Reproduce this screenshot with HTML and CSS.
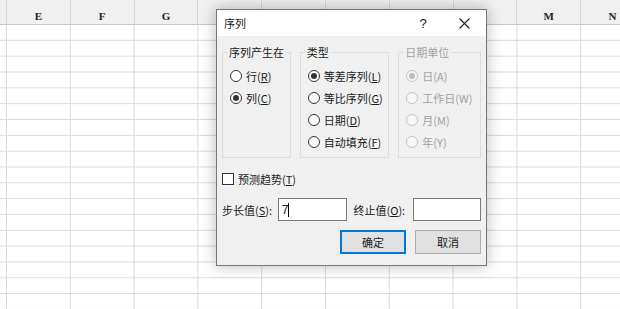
FILE: index.html
```html
<!DOCTYPE html>
<html lang="zh-CN">
<head>
  <meta charset="UTF-8">
  <title>序列</title>
  <link rel="stylesheet" href="styles.css">
</head>
<body>
  <div class="sheet">
    <div class="col-head">
      <div class="hcell first"></div>
      <div class="hcell">E</div>
      <div class="hcell">F</div>
      <div class="hcell">G</div>
      <!-- H..L sit under the dialog -->
      <div class="hcell"></div>
      <div class="hcell"></div>
      <div class="hcell"></div>
      <div class="hcell"></div>
      <div class="hcell"></div>
      <div class="hcell">M</div>
      <div class="hcell">N</div>
    </div>
    <div class="grid"></div>
  </div>

  <div class="dialog">
    <div class="titlebar">
      <span class="title">序列</span>
      <span class="help">?</span>
      <span class="close">
        <svg width="11" height="11" viewBox="0 0 11 11"><path d="M0.5 0.5L10.5 10.5M10.5 0.5L0.5 10.5" stroke="#222" stroke-width="1.1" fill="none"/></svg>
      </span>
    </div>

    <div class="dlg-body">
      <div class="groups">
        <fieldset class="group g-rows">
          <legend>序列产生在</legend>
          <div class="opt"><span class="radio"></span>行(<u>R</u>)</div>
          <div class="opt"><span class="radio on"></span>列(<u>C</u>)</div>
        </fieldset>
        <fieldset class="group g-type">
          <legend>类型</legend>
          <div class="opt"><span class="radio on"></span>等差序列(<u>L</u>)</div>
          <div class="opt"><span class="radio"></span>等比序列(<u>G</u>)</div>
          <div class="opt"><span class="radio"></span>日期(<u>D</u>)</div>
          <div class="opt"><span class="radio"></span>自动填充(<u>F</u>)</div>
        </fieldset>
        <fieldset class="group g-date disabled">
          <legend>日期单位</legend>
          <div class="opt"><span class="radio on"></span>日(A)</div>
          <div class="opt"><span class="radio"></span>工作日(W)</div>
          <div class="opt"><span class="radio"></span>月(M)</div>
          <div class="opt"><span class="radio"></span>年(Y)</div>
        </fieldset>
      </div>

      <div class="check-row"><span class="checkbox"></span>预测趋势(<u>T</u>)</div>

      <div class="field-row">
        <span class="flabel step">步长值(<u>S</u>):</span>
        <span class="field"><span class="val">7</span><span class="caret"></span></span>
        <span class="flabel stop">终止值(<u>O</u>):</span>
        <span class="field wide"></span>
      </div>

      <div class="buttons">
        <button class="btn default">确定</button>
        <button class="btn">取消</button>
      </div>
    </div>
  </div>
</body>
</html>
```

FILE: styles.css
```css
body {
  margin: 0;
  width: 620px;
  height: 309px;
  overflow: hidden;
  background: #fff;
  font-family: "Noto Sans CJK SC", "Noto Sans", sans-serif;
  font-size: 11px;
  color: #1a1a1a;
}

/* spreadsheet behind the dialog */
.sheet {
  width: 620px;
  height: 309px;
}
.col-head {
  display: flex;
  height: 24px;
  background: #f0f0f0;
  border-bottom: 1px solid #c8c8c8;
}
.hcell {
  flex: 0 0 63.8px;
  box-sizing: border-box;
  border-right: 1px solid #d6d6d6;
  font-family: "Liberation Serif", serif;
  font-size: 11px;
  font-weight: bold;
  color: #222;
  text-align: center;
  padding-top: 9px;
  line-height: 14px;
}
.hcell.first {
  flex-basis: 7px;
}
.grid {
  height: 284px;
  background-image:
    linear-gradient(to right, #dadada 1px, transparent 1px),
    linear-gradient(to top, #dadada 1px, transparent 1px);
  background-size: 63.8px 100%, 100% 15.84px;
  background-position: 6px 0, 0 0;
}

/* the dialog lies over the sheet */
.dialog {
  position: absolute;
  left: 216px;
  top: 9px;
  width: 271px;
  height: 257px;
  box-sizing: border-box;
  border: 1px solid #777;
  background: #f0f0f0;
  box-shadow: 0 0 14px rgba(0, 0, 0, 0.28);
}
.titlebar {
  display: flex;
  align-items: center;
  height: 26px;
  background: #fff;
}
.title {
  padding-left: 7px;
}
.help {
  margin-left: auto;
  font-family: "Liberation Sans", sans-serif;
  font-size: 13px;
  width: 40px;
  text-align: center;
}
.close {
  width: 43px;
  display: flex;
  justify-content: center;
}

.dlg-body {
  padding: 8px 5px 0 5px;
}
.groups {
  display: flex;
}
.group {
  margin: 0;
  height: 114px;
  box-sizing: border-box;
  border: 1px solid #dcdcdc;
  padding: 5px 0 0 4px;
}
.group legend {
  padding: 0 2px;
  line-height: 16px;
  color: #1a1a1a;
}
.g-rows { width: 69px; }
.g-type { width: 90px; margin-left: 9px; }
.g-date { width: 83px; margin-left: 9px; }

.opt {
  display: flex;
  align-items: center;
  height: 22px;
  padding-left: 3px;
  white-space: nowrap;
}
.radio {
  width: 12px;
  height: 12px;
  box-sizing: border-box;
  border: 1px solid #333;
  border-radius: 50%;
  background: #fff;
  margin-right: 4px;
  display: flex;
  align-items: center;
  justify-content: center;
}
.radio.on::after {
  content: "";
  width: 6px;
  height: 6px;
  border-radius: 50%;
  background: #333;
}
.disabled legend,
.disabled .opt {
  color: #a2a2a2;
}
.disabled .radio {
  border-color: #c4c4c4;
  background: #f7f7f7;
}
.disabled .radio.on::after {
  background: #bdbdbd;
}

.check-row {
  display: flex;
  align-items: center;
  height: 16px;
  margin-top: 13px;
}
.checkbox {
  width: 12px;
  height: 12px;
  box-sizing: border-box;
  border: 1px solid #333;
  background: #fff;
  margin-right: 4px;
}

.field-row {
  display: flex;
  align-items: center;
  margin-top: 11px;
}
.flabel.step { width: 56px; }
.flabel.stop { width: 60px; margin-left: 7px; }
.field {
  display: flex;
  align-items: center;
  width: 69px;
  height: 23px;
  box-sizing: border-box;
  border: 1px solid #7a7a7a;
  background: #fff;
  padding-left: 3px;
  font-family: "Liberation Sans", sans-serif;
  font-size: 12px;
}
.field.wide { width: 68px; }
.caret {
  width: 1px;
  height: 14px;
  background: #000;
}

.buttons {
  display: flex;
  justify-content: flex-end;
  gap: 9px;
  margin-top: 9px;
}
.btn {
  width: 66px;
  height: 24px;
  box-sizing: border-box;
  border: 1px solid #adadad;
  background: #e1e1e1;
  font-family: "Noto Sans CJK SC", sans-serif;
  font-size: 11px;
  color: #1a1a1a;
  padding: 0;
}
.btn.default {
  border-color: #0078d7;
  box-shadow: inset 0 0 0 1px #0078d7;
}
```
